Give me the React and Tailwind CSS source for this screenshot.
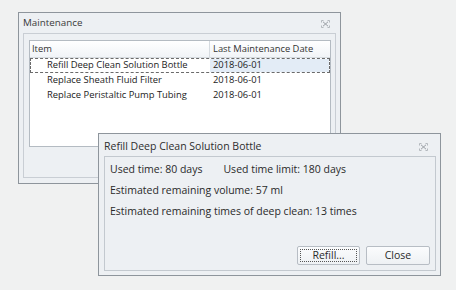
const CloseGlyph = () => (
  <svg width="9" height="8" viewBox="0 0 9 8" className="block">
    <path d="M0.5 2.5 V0.5 H2.5 M6.5 0.5 H8.5 V2.5 M8.5 5.5 V7.5 H6.5 M2.5 7.5 H0.5 V5.5" fill="none" stroke="#b3b8bd" />
    <path d="M2 1.8 L7 6.2 M7 1.8 L2 6.2" stroke="#9a9fa5" strokeWidth="1" />
  </svg>
);

const rows = [
  { item: 'Refill Deep Clean Solution Bottle', date: '2018-06-01', selected: true },
  { item: 'Replace Sheath Fluid Filter', date: '2018-06-01' },
  { item: 'Replace Peristaltic Pump Tubing', date: '2018-06-01' },
];

const MaintenanceWindow = () => (
  <div className="absolute left-[18px] top-[12px] w-[323px] h-[172px] border border-[#8e959c] bg-[#edf0f3] flex flex-col">
    <div className="h-[20px] flex items-center justify-between pl-[4px] pr-[10px] pt-[1px] text-[9.8px] text-[#3a3a3a]">
      <span>Maintenance</span>
      <CloseGlyph />
    </div>
    <div className="mx-[4px] h-[145px] border border-[#c9ced4] pl-[5px] pr-[4px] pt-[6px]">
      <div className="h-[107px] border border-[#b4bbc2] bg-white text-[9.4px] text-[#1c1c1c]">
        <div className="h-[17px] flex border-b border-[#d6dbe0] bg-gradient-to-b from-white to-[#f1f4f7] text-[#333]">
          <div className="w-[180px] border-r border-[#d6dbe0] pl-[2px] flex items-center">Item</div>
          <div className="flex-1 pl-[3px] flex items-center">Last Maintenance Date</div>
        </div>
        {rows.map((r) => (
          <div
            key={r.item}
            className={
              r.selected
                ? 'h-[15px] flex border border-dashed border-[#6a6a6a]'
                : 'h-[15px] flex border border-transparent'
            }
          >
            <div className="w-[179px] pl-[16px] flex items-center">{r.item}</div>
            <div className={r.selected ? 'flex-1 pl-[3px] flex items-center bg-[#e3ecf6]' : 'flex-1 pl-[3px] flex items-center'}>
              {r.date}
            </div>
          </div>
        ))}
      </div>
    </div>
  </div>
);

const RefillDialog = () => (
  <div className="absolute left-[98px] top-[133px] w-[343px] h-[143px] border border-[#8e959c] bg-[#edf0f3] flex flex-col">
    <div className="h-[22px] flex items-center justify-between pl-[5px] pr-[12px] pt-[3px] text-[10.5px] text-[#2e2e2e]">
      <span>Refill Deep Clean Solution Bottle</span>
      <CloseGlyph />
    </div>
    <div className="ml-[5px] mr-[4px] h-[115px] border border-[#c3c9cf] flex flex-col text-[10.5px] text-[#2a2a2a]">
      <div className="pl-[5px] pt-[2px] leading-[21px]">
        <div className="flex gap-[21px]">
          <span>Used time: 80 days</span>
          <span>Used time limit: 180 days</span>
        </div>
        <div>Estimated remaining volume: 57 ml</div>
        <div>Estimated remaining times of deep clean: 13 times</div>
      </div>
      <div className="mt-auto flex justify-end gap-[6px] pr-[5px] pb-[5px]">
        <button className="w-[63px] h-[19px] rounded-[2px] border border-[#b7bdc4] bg-gradient-to-b from-[#fbfcfd] to-[#eef1f4] p-[2px]">
          <span className="flex h-full items-center justify-center border border-dotted border-[#555]">Refill...</span>
        </button>
        <button className="w-[64px] h-[19px] rounded-[2px] border border-[#b7bdc4] bg-gradient-to-b from-[#fbfcfd] to-[#eef1f4] flex items-center justify-center">
          Close
        </button>
      </div>
    </div>
  </div>
);

export default function App() {
  return (
    <div className="relative w-[456px] h-[290px] overflow-hidden bg-[#f0f1f1] font-['Open_Sans',sans-serif]">
      <MaintenanceWindow />
      <RefillDialog />
    </div>
  );
}
